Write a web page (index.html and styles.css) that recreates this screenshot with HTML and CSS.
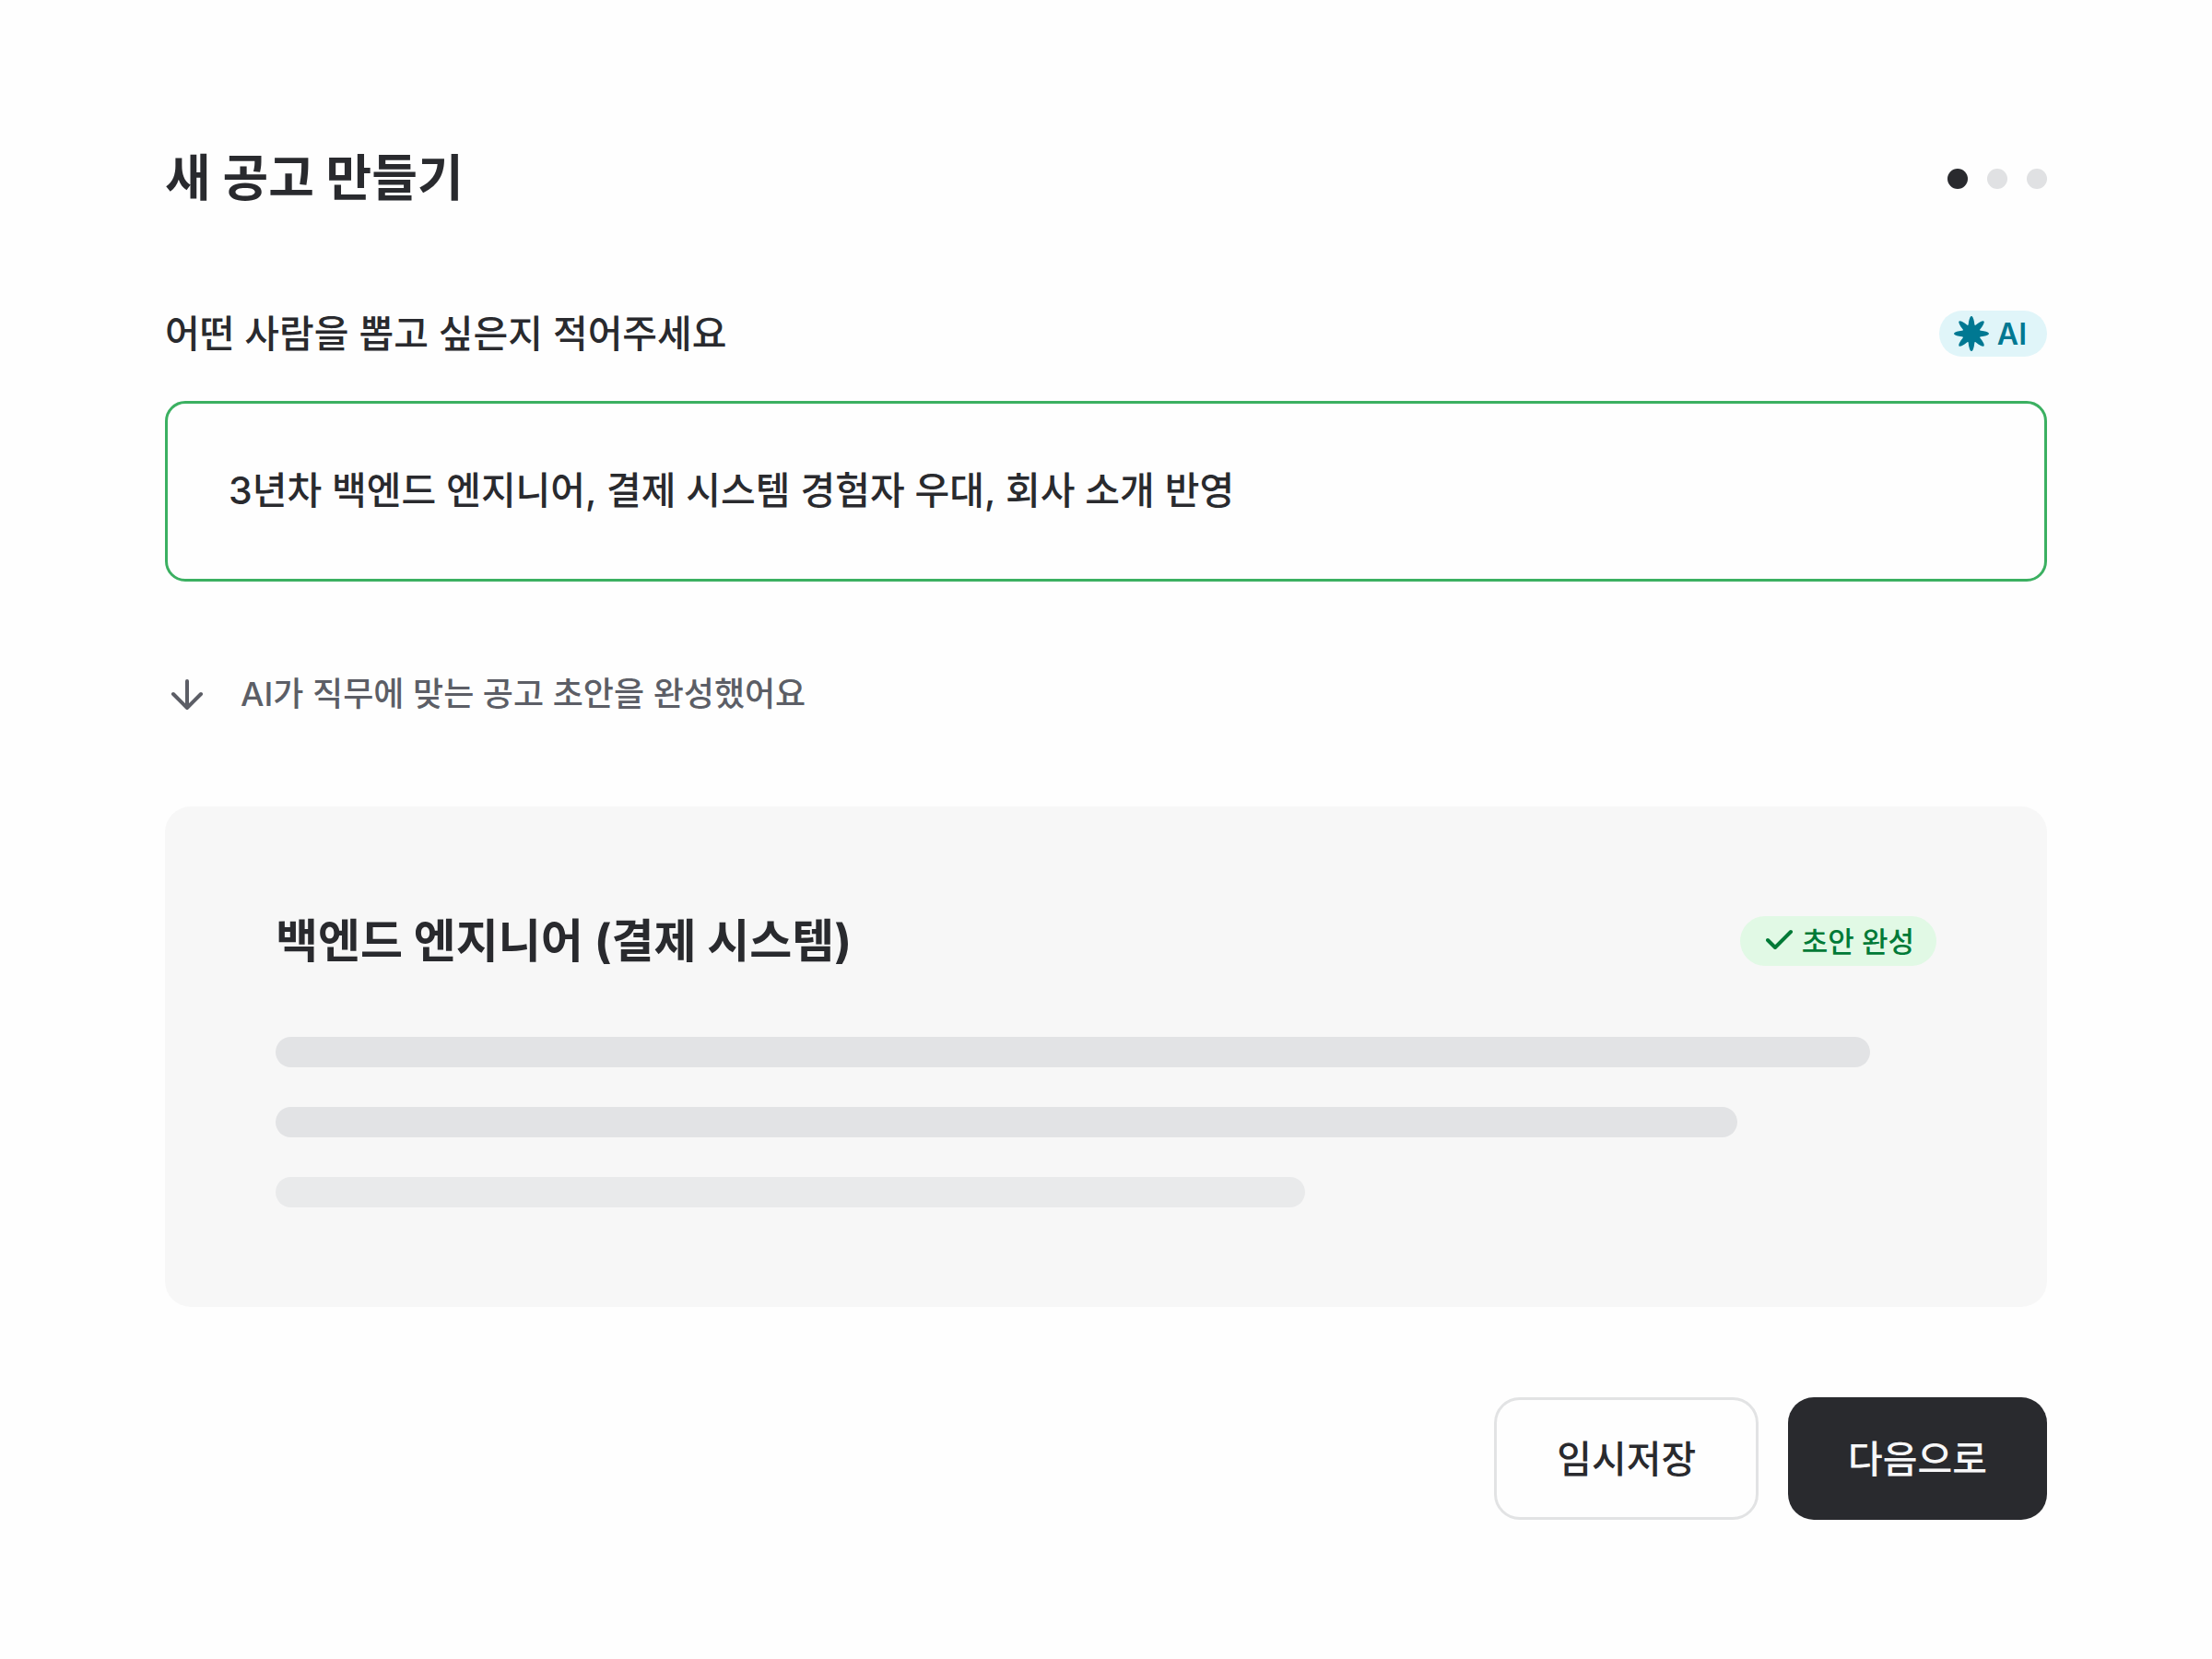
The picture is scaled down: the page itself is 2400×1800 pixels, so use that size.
FILE: index.html
```html
<!DOCTYPE html>
<html lang="ko">
<head>
<meta charset="utf-8">
<title>새 공고 만들기</title>
<meta name="viewport" content="width=device-width, initial-scale=1">
<link rel="stylesheet" href="styles.css">
</head>
<body>
<main class="page">
  <header class="row">
    <h1 class="page-title">새 공고 만들기</h1>
    <ol class="steps" aria-label="단계">
      <li class="step step-current" aria-current="step"></li>
      <li class="step"></li>
      <li class="step"></li>
    </ol>
  </header>

  <form class="form">
    <div class="row field-head">
      <label class="label" for="prompt">어떤 사람을 뽑고 싶은지 적어주세요</label>
      <span class="badge badge-ai">
        <svg class="ai-icon" viewBox="-19 -19 38 38" aria-hidden="true">
          <ellipse rx="19" ry="4"/>
          <ellipse rx="4" ry="19"/>
          <ellipse rx="19" ry="4" transform="rotate(45)"/>
          <ellipse rx="19" ry="4" transform="rotate(-45)"/>
          <circle r="10"/>
        </svg>
        AI
      </span>
    </div>
    <input class="prompt" id="prompt" type="text" value="3년차 백엔드 엔지니어, 결제 시스템 경험자 우대, 회사 소개 반영">

    <p class="hint">
      <svg class="arrow-icon" viewBox="0 0 48 48" fill="none" stroke="currentColor" stroke-width="4" stroke-linecap="round" stroke-linejoin="round" aria-hidden="true">
        <path d="M24 10v29M9 24l15 15 15-15"/>
      </svg>
      AI가 직무에 맞는 공고 초안을 완성했어요
    </p>

    <section class="draft">
      <div class="row">
        <h2 class="draft-title">백엔드 엔지니어 (결제 시스템)</h2>
        <span class="badge badge-done">
          <svg class="check-icon" viewBox="0 0 30 30" fill="none" stroke="currentColor" stroke-width="4" stroke-linecap="round" stroke-linejoin="round" aria-hidden="true">
            <path d="M2 14l8 8L27 5"/>
          </svg>
          <span class="badge-text">초안 완성</span>
        </span>
      </div>
      <div class="lines">
        <div class="line" style="width: 96%"></div>
        <div class="line" style="width: 88%"></div>
        <div class="line line-faint" style="width: 62%"></div>
      </div>
    </section>

    <div class="actions">
      <button class="button button-outline" type="button">임시저장</button>
      <button class="button button-solid" type="submit">다음으로</button>
    </div>
  </form>
</main>
</body>
</html>
```
FILE: styles.css
```css
* {
  box-sizing: border-box;
}

body {
  margin: 0;
  background: #fefefe;
  color: #292a2e;
  font-family: Inter, "Noto Sans CJK KR", sans-serif;
}

.page {
  padding: 154px 179px;
}

.row {
  display: flex;
  align-items: center;
  justify-content: space-between;
}

.page-title {
  margin: 0;
  font-size: 54px;
  line-height: 80px;
  font-weight: 700;
}

.steps {
  display: flex;
  gap: 21px;
  margin: 0;
  padding: 0;
  list-style: none;
}

.step {
  width: 22px;
  height: 22px;
  border-radius: 50%;
  background: #e0e1e3;
}

.step-current {
  background: #292a2e;
}

.field-head {
  margin-top: 96px;
}

.label {
  font-size: 41px;
  line-height: 64px;
  font-weight: 500;
}

.badge {
  display: flex;
  align-items: center;
  border-radius: 27px;
}

.badge-ai {
  height: 50px;
  gap: 9px;
  padding: 0 22px 0 16px;
  background: #e0f5f9;
  color: #007892;
  font-size: 32px;
  font-weight: 600;
}

.ai-icon {
  width: 38px;
  height: 38px;
  fill: currentColor;
}

.prompt {
  display: block;
  width: 100%;
  height: 196px;
  margin-top: 41px;
  padding: 0 66px 8px;
  border: 3px solid #3bb061;
  border-radius: 22px;
  outline: none;
  background: #fefefe;
  color: inherit;
  font-family: inherit;
  font-size: 41px;
  font-weight: 500;
}

.hint {
  display: flex;
  align-items: center;
  gap: 34px;
  margin: 94px 0;
  color: #5c5e66;
  font-size: 36px;
  line-height: 56px;
  font-weight: 500;
}

.arrow-icon {
  width: 48px;
  height: 48px;
}

.draft {
  padding: 108px 120px;
  border-radius: 28px;
  background: #f7f7f7;
}

.draft-title {
  margin: 0;
  font-size: 50px;
  line-height: 76px;
  font-weight: 700;
}

.badge-done {
  height: 54px;
  gap: 9px;
  padding: 0 24px 0 28px;
  background: #e1f9e5;
  color: #007a37;
  font-size: 31px;
  font-weight: 500;
}

.badge-text {
  padding-bottom: 4px;
}

.check-icon {
  width: 30px;
  height: 30px;
}

.lines {
  display: grid;
  gap: 43px;
  margin-top: 66px;
}

.line {
  height: 33px;
  border-radius: 17px;
  background: #e2e3e5;
}

.line-faint {
  background: #e9eaeb;
}

.actions {
  display: flex;
  justify-content: flex-end;
  gap: 32px;
  margin-top: 98px;
}

.button {
  height: 133px;
  padding: 0 65px 6px;
  border: 0;
  border-radius: 28px;
  font-family: inherit;
  font-size: 41px;
  font-weight: 500;
}

.button-outline {
  border: 3px solid #e2e3e4;
  background: #fefefe;
  color: #292a2e;
}

.button-solid {
  background: #292a2e;
  color: #f7f7f8;
}
```
